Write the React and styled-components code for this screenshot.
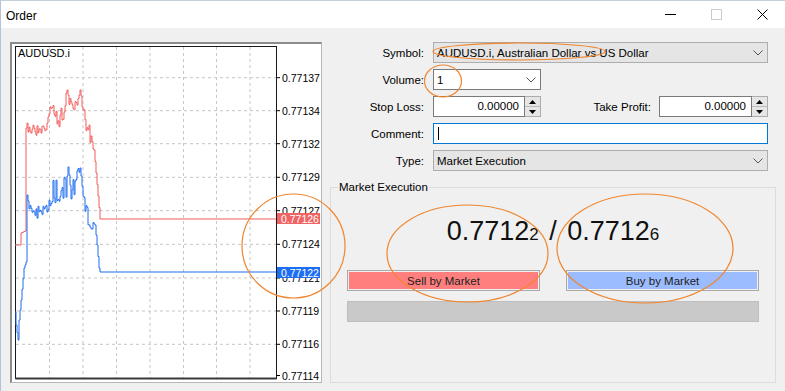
import React from "react";
import styled, { createGlobalStyle } from "styled-components";

const GlobalStyle = createGlobalStyle`
  html, body { margin: 0; padding: 0; background: #ffffff; }
  body { font-family: "Liberation Sans", Arial, sans-serif; color: #000; }
`;

const Window = styled.div`
  position: relative;
  width: 785px;
  height: 391px;
  box-sizing: border-box;
  background: #f0f0f0;
  border-left: 1px solid #b4c3d6;
  border-top: 1px solid #c4cfdc;
  display: flex;
  flex-direction: column;
  overflow: hidden;
`;

const TitleBar = styled.div`
  height: 27px;
  flex: none;
  background: #ffffff;
  display: flex;
  align-items: center;
`;

const Title = styled.div`
  flex: 1;
  padding: 2px 0 0 5px;
  font-size: 12px;
`;

const WinButton = styled.div`
  width: 46px;
  height: 100%;
  display: flex;
  align-items: center;
  justify-content: center;
`;

const Body = styled.div`
  flex: 1;
  display: flex;
  gap: 8px;
  padding: 14px 9px 8px 9px;
  min-height: 0;
`;

const ChartFrame = styled.div`
  width: 312px;
  box-sizing: border-box;
  background: #ffffff;
  border-style: solid;
  border-width: 2px 1px 1px 2px;
  border-color: #8c8c8c #b8b8b8 #b8b8b8 #8c8c8c;
  svg { display: block; }
`;

const FormColumn = styled.div`
  width: 446px;
  display: flex;
  flex-direction: column;
`;

const FieldGrid = styled.div`
  display: grid;
  grid-template-columns: 94px 335px;
  grid-auto-rows: 21px;
  column-gap: 9px;
  row-gap: 6px;
`;

const Label = styled.div`
  font-size: 11.5px;
  text-align: right;
  align-self: center;
  white-space: nowrap;
  ${(p) => p.$grow && "flex: 1; margin-right: 8px;"}
`;

const Select = styled.div`
  box-sizing: border-box;
  height: 21px;
  width: ${(p) => p.$width || "100%"};
  display: flex;
  align-items: center;
  justify-content: space-between;
  padding: 0 4px 0 3px;
  font-size: 11.5px;
  white-space: nowrap;
  background: ${(p) => (p.$white ? "#ffffff" : "#e5e5e5")};
  border: 1px solid ${(p) => (p.$white ? "#7a7a7a" : "#adadad")};
`;

const Row = styled.div`
  display: flex;
  align-items: center;
`;

const NumBox = styled.div`
  display: flex;
  width: ${(p) => p.$width};
  height: 21px;
`;

const NumInput = styled.div`
  flex: 1;
  box-sizing: border-box;
  border: 1px solid #7a7a7a;
  background: #ffffff;
  font-size: 11.5px;
  text-align: right;
  padding-right: 5px;
  line-height: 19px;
`;

const Spinner = styled.div`
  width: 16px;
  box-sizing: border-box;
  border: 1px solid #adadad;
  border-left: none;
  background: #e6e6e6;
  display: flex;
  flex-direction: column;
`;

const SpinHalf = styled.div`
  flex: 1;
  display: flex;
  align-items: center;
  justify-content: center;
  border-top: ${(p) => (p.$bottom ? "1px solid #bcbcbc" : "none")};
`;

const TextInput = styled.div`
  box-sizing: border-box;
  height: 21px;
  border: 1px solid #0078d7;
  background: #ffffff;
  display: flex;
  align-items: center;
  padding-left: 4px;
`;

const Caret = styled.div`
  width: 1px;
  height: 13px;
  background: #000;
`;

const GroupBox = styled.fieldset`
  flex: 1;
  min-width: 0;
  margin: 9px 0 0 0;
  padding: 0 16px;
  border: 1px solid #dcdcdc;
  box-sizing: border-box;
`;

const Legend = styled.legend`
  margin-left: -9px;
  padding: 0 1px;
  font-size: 11.5px;
  line-height: 14px;
`;

const Quote = styled.div`
  margin-top: 22px;
  text-align: center;
  font-size: 27px;
  line-height: 30px;
  color: #111;
  white-space: pre;
`;

const Pip = styled.span`
  font-size: 17px;
`;

const Slash = styled.span`
  margin: 0 3px;
`;

const ButtonRow = styled.div`
  margin-top: 20px;
  display: flex;
  justify-content: space-between;
`;

const TradeButton = styled.div`
  width: 193px;
  height: 21px;
  box-sizing: border-box;
  border: 1px solid #a9a9a9;
  padding: 1px;
  background: ${(p) => p.$color};
  background-clip: content-box;
  font-size: 11.5px;
  color: #222;
  display: flex;
  align-items: center;
  justify-content: center;
`;

const ProgressBar = styled.div`
  margin-top: 10px;
  height: 21px;
  box-sizing: border-box;
  background: #c9c9c9;
  border: 1px solid #bfbfbf;
`;

const Annotations = styled.svg`
  position: absolute;
  left: -1px;
  top: -1px;
  pointer-events: none;
`;

const Chevron = () => (
  <svg width="10" height="6" viewBox="0 0 10 6">
    <polyline points="0.5,0.5 5,5 9.5,0.5" fill="none" stroke="#555" strokeWidth="1" />
  </svg>
);

const NumField = ({ width }) => (
  <NumBox $width={width}>
    <NumInput>0.00000</NumInput>
    <Spinner>
      <SpinHalf>
        <svg width="7" height="4"><polygon points="3.5,0 7,4 0,4" fill="#000" /></svg>
      </SpinHalf>
      <SpinHalf $bottom>
        <svg width="7" height="4"><polygon points="0,0 7,0 3.5,4" fill="#000" /></svg>
      </SpinHalf>
    </Spinner>
  </NumBox>
);

// tick-chart series, page coordinates
function rnd(i, seed) {
  const s = Math.sin(i * 12.9898 + seed * 78.233) * 43758.5453;
  return s - Math.floor(s);
}

function series(keys, jitter, seed) {
  const interp = (x) => {
    for (let i = 1; i < keys.length; i++) {
      const [x0, y0] = keys[i - 1];
      const [x1, y1] = keys[i];
      if (x <= x1) return y0 + ((y1 - y0) * (x - x0)) / (x1 - x0 || 1);
    }
    return keys[keys.length - 1][1];
  };
  const start = keys[0][0];
  const end = keys[keys.length - 1][0];
  let d = `M${start} ${interp(start).toFixed(1)}`;
  for (let x = start + 1; x <= end; x++) {
    const j = jitter.find((r) => x >= r[0] && x <= r[1]);
    let y = interp(x);
    if (j) y += (rnd(x, seed) - 0.5) * j[2];
    d += ` H${x} V${y.toFixed(1)}`;
  }
  return d;
}

const redPath = series(
  [[15, 245], [20, 245], [21, 233], [25, 231], [26, 128], [46, 132], [49, 112], [53, 104], [57, 122], [63, 112], [67, 90], [70, 105], [74, 104], [78, 100], [80, 90], [83, 108], [87, 128], [92, 140], [94, 150], [100, 219], [276, 219]],
  [[27, 46, 12], [47, 66, 16], [69, 78, 14], [82, 93, 18]],
  3
);

const bluePath = series(
  [[15, 312], [16, 325], [18, 340], [19, 320], [21, 300], [24, 268], [26, 262], [27, 195], [29, 212], [47, 212], [50, 198], [54, 190], [60, 198], [66, 185], [68, 167], [71, 190], [76, 185], [80, 168], [83, 192], [87, 215], [95, 225], [97, 245], [99, 268], [100, 272], [276, 272]],
  [[28, 46, 14], [48, 66, 26], [70, 78, 22], [82, 92, 18]],
  7
);

const levels = [
  ["0.77137", 77.7],
  ["0.77134", 110.7],
  ["0.77132", 143.7],
  ["0.77129", 177.3],
  ["0.77127", 210.7],
  ["0.77124", 244.3],
  ["0.77121", 278],
  ["0.77119", 311],
  ["0.77116", 344.3],
  ["0.77114", 375.5],
];

const gridX = [49.5, 83, 116.5, 150, 183.5, 216.5, 250];

const PriceChart = () => (
  <svg width="309" height="338" viewBox="12 44 309 338" fontFamily="Liberation Sans, Arial, sans-serif">
    {gridX.map((x) => (
      <line key={x} x1={x} y1="47" x2={x} y2="378" stroke="#c6c6c6" strokeDasharray="3 3" />
    ))}
    {levels.slice(0, 9).map(([, y]) => (
      <line key={y} x1="16" y1={y} x2="276" y2={y} stroke="#c6c6c6" strokeDasharray="3 3" />
    ))}
    <rect x="15.5" y="46.5" width="261" height="332" fill="none" stroke="#1a1a1a" />
    <line x1="15.5" y1="378.5" x2="276.5" y2="378.5" stroke="#3a3a3a" strokeWidth="2" />
    {levels.map(([t, y]) => (
      <g key={t}>
        <line x1="276" y1={y} x2="280" y2={y} stroke="#000" />
        <text x="282" y={y} dominantBaseline="central" fontSize="10.5" fill="#000">{t}</text>
      </g>
    ))}
    <text x="18" y="53" dominantBaseline="central" fontSize="11" fill="#000">AUDUSD.i</text>
    <path d={redPath} fill="none" stroke="#f25b5b" strokeWidth="1" />
    <path d={bluePath} fill="none" stroke="#1f6ff0" strokeWidth="1" />
    <rect x="277" y="213" width="43" height="11" fill="#f06464" />
    <text x="281" y="218.7" dominantBaseline="central" fontSize="10.5" fill="#fff">0.77126</text>
    <rect x="277" y="267" width="43" height="11" fill="#1c6ef2" />
    <text x="281" y="272.7" dominantBaseline="central" fontSize="10.5" fill="#fff">0.77122</text>
  </svg>
);

export default function App() {
  return (
    <>
      <GlobalStyle />
      <Window>
        <TitleBar>
          <Title>Order</Title>
          <WinButton>
            <svg width="11" height="11"><line x1="0" y1="5.5" x2="11" y2="5.5" stroke="#000" /></svg>
          </WinButton>
          <WinButton>
            <svg width="11" height="11"><rect x="0.5" y="0.5" width="10" height="10" fill="none" stroke="#cccccc" /></svg>
          </WinButton>
          <WinButton>
            <svg width="11" height="11">
              <line x1="0.5" y1="0.5" x2="10.5" y2="10.5" stroke="#000" />
              <line x1="10.5" y1="0.5" x2="0.5" y2="10.5" stroke="#000" />
            </svg>
          </WinButton>
        </TitleBar>
        <Body>
          <ChartFrame>
            <PriceChart />
          </ChartFrame>
          <FormColumn>
            <FieldGrid>
              <Label>Symbol:</Label>
              <Select>
                <span>AUDUSD.i, Australian Dollar vs US Dollar</span>
                <Chevron />
              </Select>
              <Label>Volume:</Label>
              <Select $white $width="108px">
                <span>1</span>
                <Chevron />
              </Select>
              <Label>Stop Loss:</Label>
              <Row>
                <NumField width="108px" />
                <Label $grow>Take Profit:</Label>
                <NumField width="109px" />
              </Row>
              <Label>Comment:</Label>
              <TextInput>
                <Caret />
              </TextInput>
              <Label>Type:</Label>
              <Select>
                <span>Market Execution</span>
                <Chevron />
              </Select>
            </FieldGrid>
            <GroupBox>
              <Legend>Market Execution</Legend>
              <Quote>
                0.7712<Pip>2</Pip>{" "}<Slash>/</Slash>{" "}0.7712<Pip>6</Pip>
              </Quote>
              <ButtonRow>
                <TradeButton $color="#ff7f7f">Sell by Market</TradeButton>
                <TradeButton $color="#9bbcff">Buy by Market</TradeButton>
              </ButtonRow>
              <ProgressBar />
            </GroupBox>
          </FormColumn>
        </Body>
        <Annotations width="785" height="391">
          <g fill="none" stroke="#f0862e" strokeWidth="1.2">
            <ellipse cx="519" cy="51.5" rx="86" ry="8.5" />
            <ellipse cx="443" cy="81" rx="18.5" ry="16" />
            <ellipse cx="293.5" cy="246" rx="51.5" ry="52" />
            <ellipse cx="467.5" cy="253.5" rx="80.5" ry="48.5" />
            <ellipse cx="645" cy="248.5" rx="88" ry="54.5" />
          </g>
        </Annotations>
      </Window>
    </>
  );
}
